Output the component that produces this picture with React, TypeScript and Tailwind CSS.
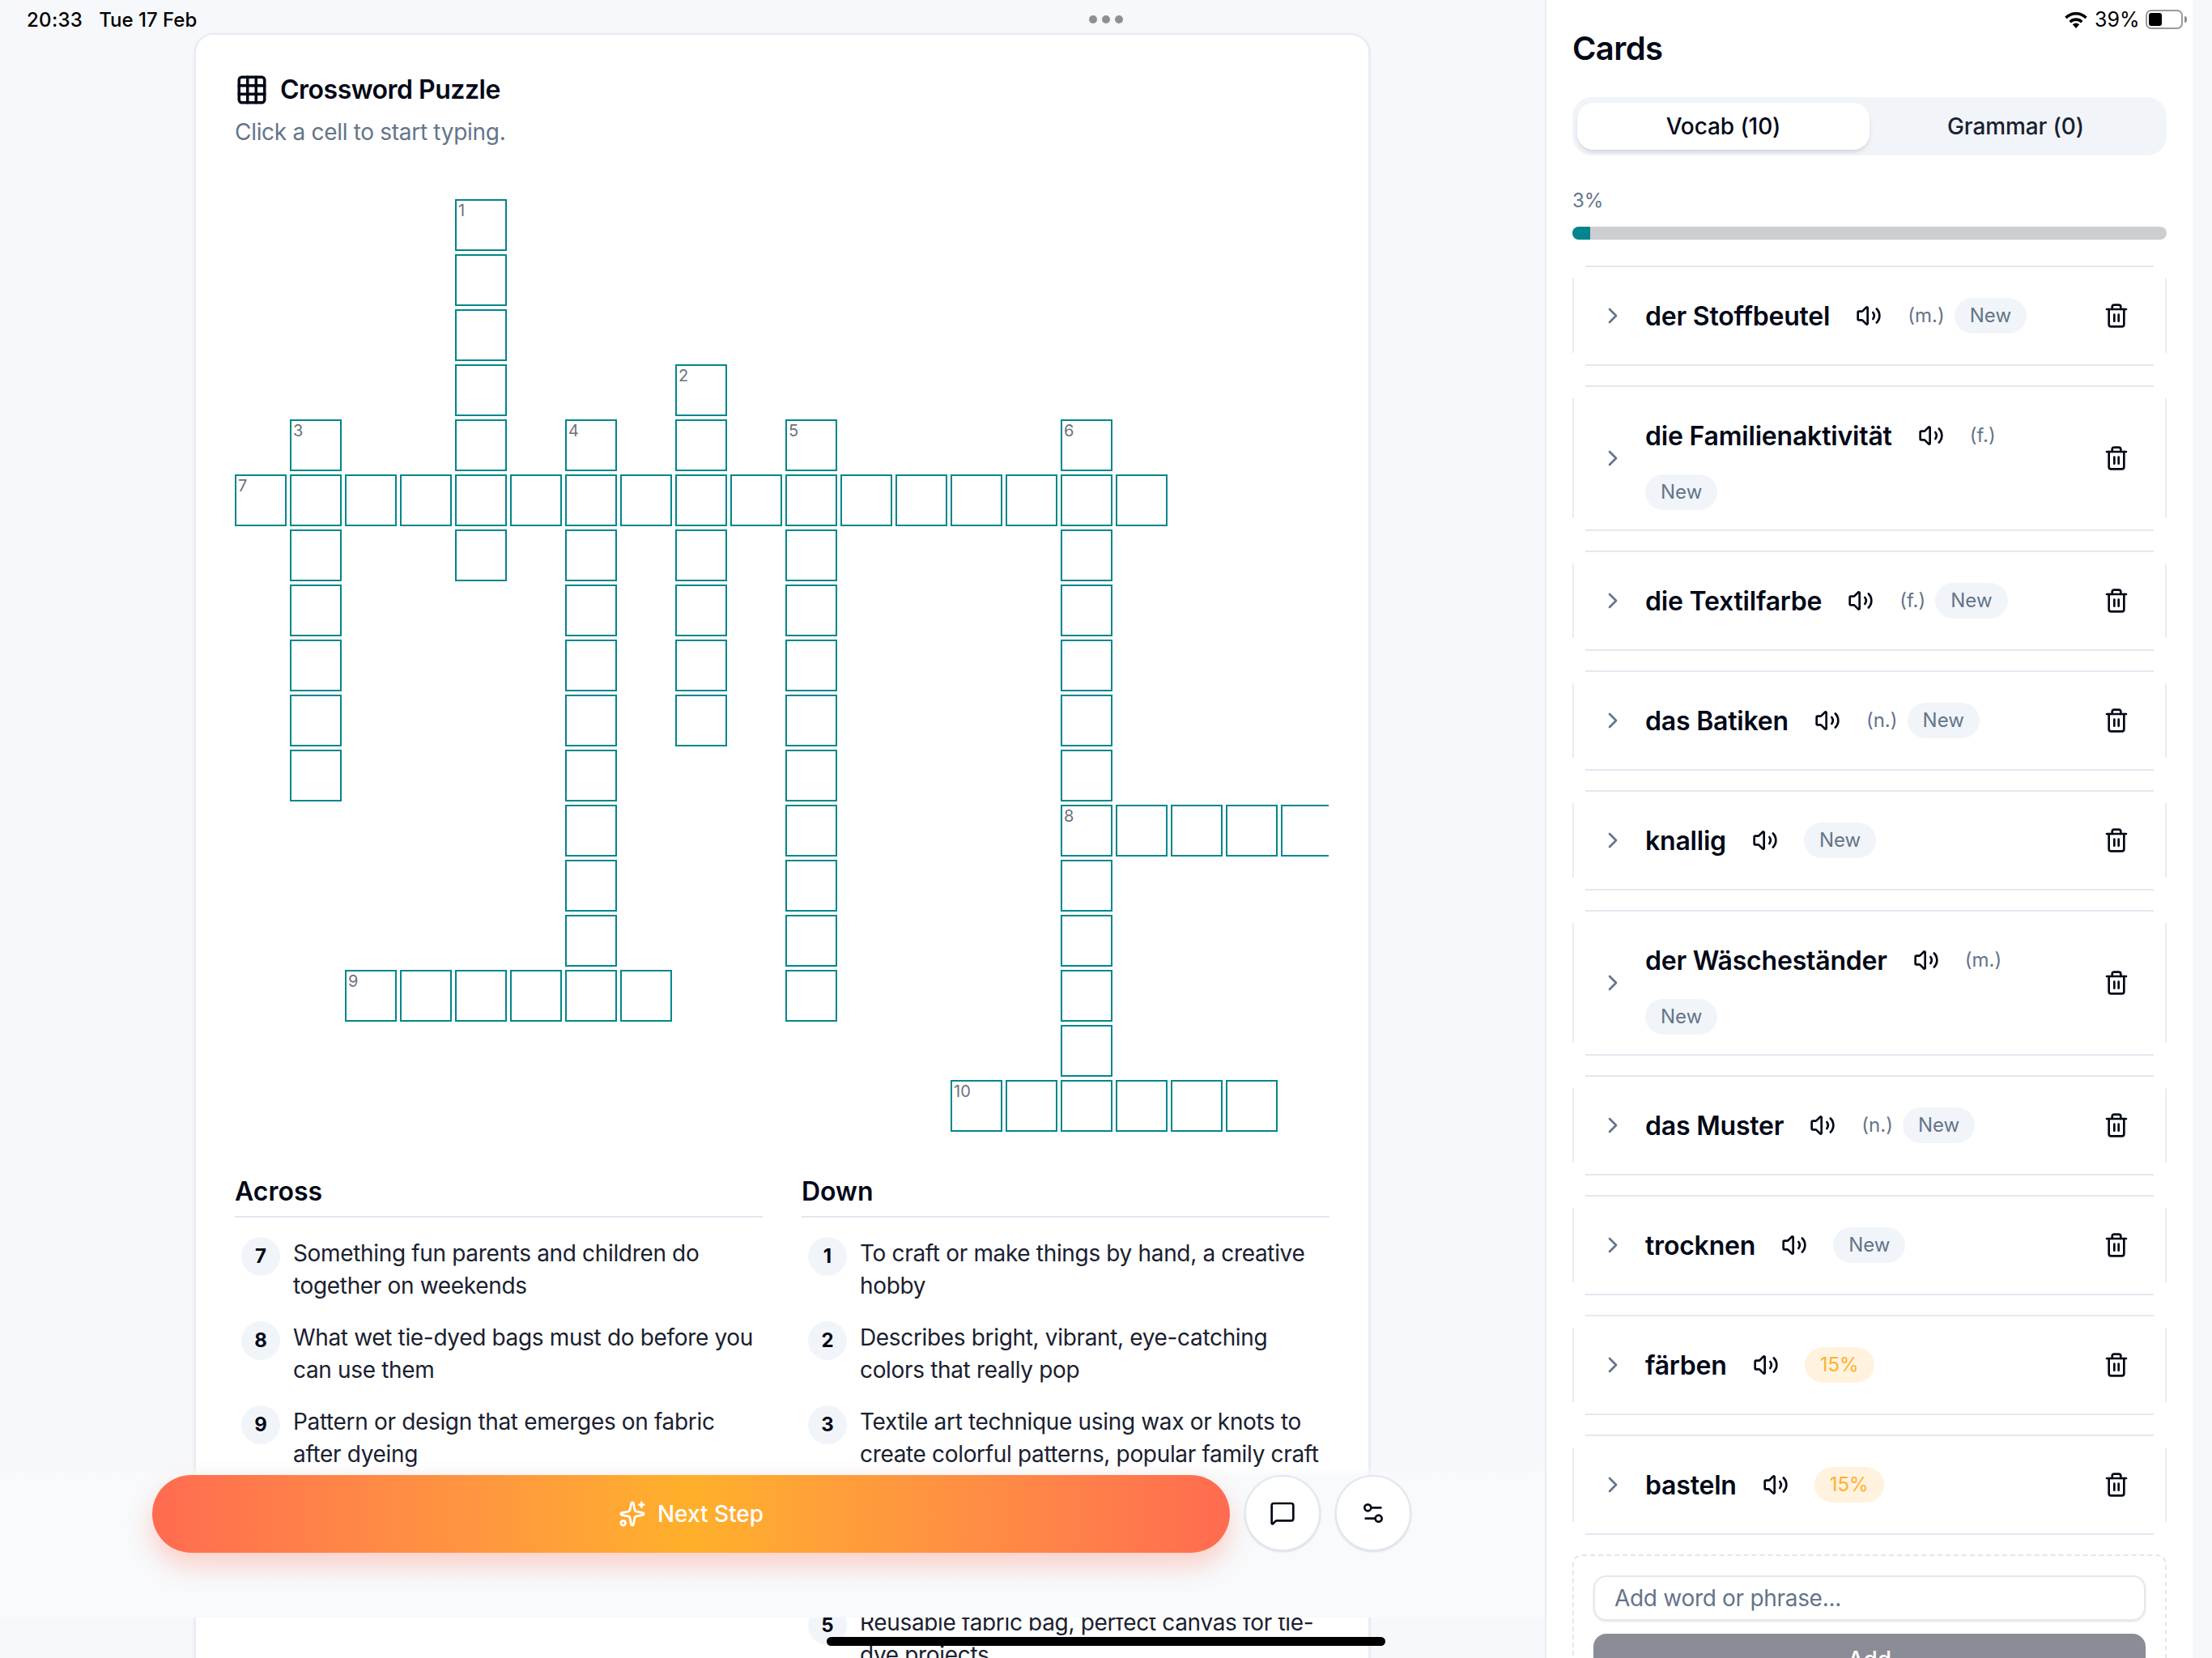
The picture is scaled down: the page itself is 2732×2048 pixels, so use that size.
import { ChevronRight, Grid3x3, MessageSquare, Settings2, Sparkles, Trash2, Volume2 } from 'lucide-react';

const ROWS = 17;
const COLS = 20;

// [row, col, length, direction]
const entries: [number, number, number, 'a' | 'd'][] = [
    [0, 4, 7, 'd'],
    [3, 8, 7, 'd'],
    [4, 1, 7, 'd'],
    [4, 6, 11, 'd'],
    [4, 10, 11, 'd'],
    [4, 15, 13, 'd'],
    [5, 0, 17, 'a'],
    [11, 15, 5, 'a'],
    [14, 2, 6, 'a'],
    [16, 13, 6, 'a'],
];

const numbers: Record<string, number> = {
    '0-4': 1, '3-8': 2, '4-1': 3, '4-6': 4, '4-10': 5, '4-15': 6, '5-0': 7, '11-15': 8, '14-2': 9, '16-13': 10,
};

const filled = new Set<string>();
entries.forEach(([r, c, len, dir]) => {
    for (let i = 0; i < len; i++) {
        filled.add(dir === 'a' ? `${r}-${c + i}` : `${r + i}-${c}`);
    }
});

const across = [
    { n: 7, text: 'Something fun parents and children do together on weekends' },
    { n: 8, text: 'What wet tie-dyed bags must do before you can use them' },
    { n: 9, text: 'Pattern or design that emerges on fabric after dyeing' },
];

const down = [
    { n: 1, text: 'To craft or make things by hand, a creative hobby' },
    { n: 2, text: 'Describes bright, vibrant, eye-catching colors that really pop' },
    { n: 3, text: 'Textile art technique using wax or knots to create colorful patterns, popular family craft' },
    { n: 4, text: 'To add color to fabric by soaking it in a liquid, the main step of any tie-dye project you try at home with the family' },
    { n: 5, text: 'Reusable fabric bag, perfect canvas for tie-dye projects' },
];

const cards = [
    { word: 'der Stoffbeutel', gender: '(m.)', status: 'New' },
    { word: 'die Familienaktivität', gender: '(f.)', status: 'New' },
    { word: 'die Textilfarbe', gender: '(f.)', status: 'New' },
    { word: 'das Batiken', gender: '(n.)', status: 'New' },
    { word: 'knallig', status: 'New' },
    { word: 'der Wäscheständer', gender: '(m.)', status: 'New' },
    { word: 'das Muster', gender: '(n.)', status: 'New' },
    { word: 'trocknen', status: 'New' },
    { word: 'färben', status: '15%' },
    { word: 'basteln', status: '15%' },
];

function ClueList({ title, clues }: { title: string, clues: { n: number, text: string }[] }) {
    return (
        <div>
            <h3 className="text-[32px] leading-[48px] font-semibold pb-[6px] border-b-2 border-[#e2e8f0]">{title}</h3>
            <div className="mt-6 flex flex-col gap-6">
                {clues.map(c => (
                    <div key={c.n} className="flex gap-4 pl-2">
                        <span className="w-12 h-12 shrink-0 rounded-full bg-[#f1f5f9] flex items-center justify-center text-2xl font-bold">{c.n}</span>
                        <p className="text-[28px] leading-10 tracking-[-0.34px] text-[#1a2030]">{c.text}</p>
                    </div>
                ))}
            </div>
        </div>
    );
}

function WordCard({ word, gender, status }: { word: string, gender?: string, status: string }) {
    const isNew = status === 'New';
    return (
        <div className="relative flex items-center pl-[34px] pr-[26px] py-[26px] before:absolute before:inset-x-4 before:inset-y-0 before:border-y-2 before:border-[#e2e8f0] after:absolute after:inset-x-0 after:inset-y-4 after:border-x-2 after:border-[#e8edf4]">
            <ChevronRight size={32} className="text-[#64748b] shrink-0" />
            <div className="ml-6 w-[520px] flex flex-wrap items-center gap-x-3 gap-y-3">
                <span className="pt-0.5 text-[32px] font-semibold tracking-[-0.2px]">{word}</span>
                <span className="p-5"><Volume2 size={32} /></span>
                {gender && <span className="text-2xl text-[#64748b]">{gender}</span>}
                <span className={`h-11 px-[19px] rounded-full flex items-center text-2xl ${isNew ? 'bg-[#f1f5f9] text-[#64748b]' : 'bg-[#fff3e0] text-[#ffb02a]'}`}>{status}</span>
            </div>
            <span className="ml-auto p-5"><Trash2 size={32} /></span>
        </div>
    );
}

export default function App() {
    return (
        <div className="relative flex h-[2048px] w-[2732px] overflow-hidden bg-[#f6f8fb] font-[Inter,sans-serif] text-[#020817] antialiased">
            {/* Left pane */}
            <div className="relative w-[1908px] shrink-0 pl-[240px] pt-[41px]">
                <div className="w-[1452px] bg-white border-2 border-[#e8ecf3] rounded-3xl shadow-sm p-12">
                    <h2 className="flex items-center gap-3.5 text-[32px] font-semibold h-10 tracking-[-0.5px]">
                        <Grid3x3 size={42} /> Crossword Puzzle
                    </h2>
                    <p className="mt-3 text-[28px] leading-10 tracking-[-0.3px] text-[#64748b]">Click a cell to start typing.</p>

                    <div className="mt-[63px] w-[1351px] overflow-hidden">
                        <div className="grid grid-cols-[repeat(20,64px)] auto-rows-[64px] gap-1">
                            {Array.from({ length: ROWS * COLS }, (_, i) => {
                                const key = `${Math.floor(i / COLS)}-${i % COLS}`;
                                if (!filled.has(key)) return <div key={key} />;
                                return (
                                    <div key={key} className="relative border-2 border-[#00868c]">
                                        {numbers[key] && <span className="absolute left-0.5 top-0.5 text-[20px] leading-5 text-[#6b7280]">{numbers[key]}</span>}
                                    </div>
                                );
                            })}
                        </div>
                    </div>

                    <div className="mt-[50px] grid grid-cols-2 gap-12">
                        <ClueList title="Across" clues={across} />
                        <ClueList title="Down" clues={down} />
                    </div>
                </div>

                {/* Sticky action bar */}
                <div className="absolute inset-x-0 bottom-[50px] h-[188px] pt-3 pl-[188px] flex items-start gap-[18px] bg-linear-to-b from-transparent to-[#f8fafc] to-[14px]">
                    <button className="w-[1331px] h-24 rounded-full bg-linear-to-r from-[#ff6b50] via-[#ffb02a] to-[#ff6b50] text-white text-[28px] font-medium flex items-center justify-center gap-3.5 shadow-[0_16px_32px_rgba(255,107,80,0.3)]">
                        <Sparkles size={34} /> Next Step
                    </button>
                    <button className="w-[94px] h-[94px] rounded-full bg-white border-2 border-[#e2e8f0] shadow-sm flex items-center justify-center">
                        <MessageSquare size={32} />
                    </button>
                    <button className="w-[94px] h-[94px] rounded-full bg-white border-2 border-[#e2e8f0] shadow-sm flex items-center justify-center">
                        <Settings2 size={32} />
                    </button>
                </div>
            </div>

            {/* Cards panel */}
            <div className="w-[800px] shrink-0 bg-white border-l-2 border-[#e8ecf3] px-8 pt-10">
                <h2 className="text-[40px] leading-10 font-semibold tracking-[-0.6px]">Cards</h2>
                <div className="mt-10 h-[72px] rounded-3xl bg-[#f1f5f9] flex px-1.5 py-[7px]">
                    <div className="w-[361px] rounded-[20px] bg-white shadow-md flex items-center justify-center text-[28px] font-medium tracking-[-0.1px]">Vocab (10)</div>
                    <div className="flex-1 flex items-center justify-center text-[28px] font-medium tracking-[-0.1px] text-[#1a2030]">Grammar (0)</div>
                </div>
                <p className="mt-10 text-2xl leading-8 text-[#64748b]">3%</p>
                <div className="mt-4 h-4 rounded-full bg-[#cdced2] overflow-hidden">
                    <div className="w-[22px] h-full bg-[#00868c]" />
                </div>
                <div className="mt-8 flex flex-col gap-6">
                    {cards.map(card => <WordCard key={card.word} {...card} />)}
                </div>
                <div className="mt-6 border-2 border-dashed border-[#e2e8f0] rounded-xl p-6">
                    <div className="h-14 rounded-2xl border-2 border-[#e2e8f0] shadow-sm flex items-center px-[24px] text-[28px] tracking-[-0.3px] text-[#64748b]">Add word or phrase...</div>
                    <div className="mt-4 h-16 rounded-2xl bg-[#8a8d96] flex items-center justify-center text-[28px] font-medium text-white">Add</div>
                </div>
            </div>

            {/* iPad status bar */}
            <div className="absolute left-[33px] top-[10px] flex gap-[20px] text-[24px] leading-[30px] font-medium text-black">
                <span className="tracking-[0.3px]">20:33</span>
                <span>Tue 17 Feb</span>
            </div>
            <div className="absolute left-[1345px] top-[19px] flex gap-1.5">
                <span className="w-2.5 h-2.5 rounded-full bg-[#8e8e93]" />
                <span className="w-2.5 h-2.5 rounded-full bg-[#8e8e93]" />
                <span className="w-2.5 h-2.5 rounded-full bg-[#8e8e93]" />
            </div>
            <div className="absolute left-[2549px] top-[10px] flex items-center text-[25px] leading-[28px] text-black">
                <svg width="30" height="23" viewBox="0 0 28 22" fill="none" stroke="black" strokeWidth="3.4">
                    <path d="M2 8.5a17 17 0 0 1 24 0" />
                    <path d="M7 13.5a10 10 0 0 1 14 0" />
                    <path d="M14 21l-4-4.5a5.5 5.5 0 0 1 8 0z" fill="black" stroke="none" />
                </svg>
                <span className="ml-[8px]">39%</span>
                <div className="ml-[7px] w-[46px] h-6 rounded-[7px] border-2 border-[#9a9a9a] p-0.5">
                    <div className="w-4 h-full rounded-[3px] bg-black" />
                </div>
                <div className="ml-[2px] w-[3px] h-2 rounded-r-sm bg-[#8e8e93]" />
            </div>
            <div className="absolute left-[1021px] top-[2022px] w-[690px] h-[11px] rounded-full bg-black" />
        </div>
    );
}
